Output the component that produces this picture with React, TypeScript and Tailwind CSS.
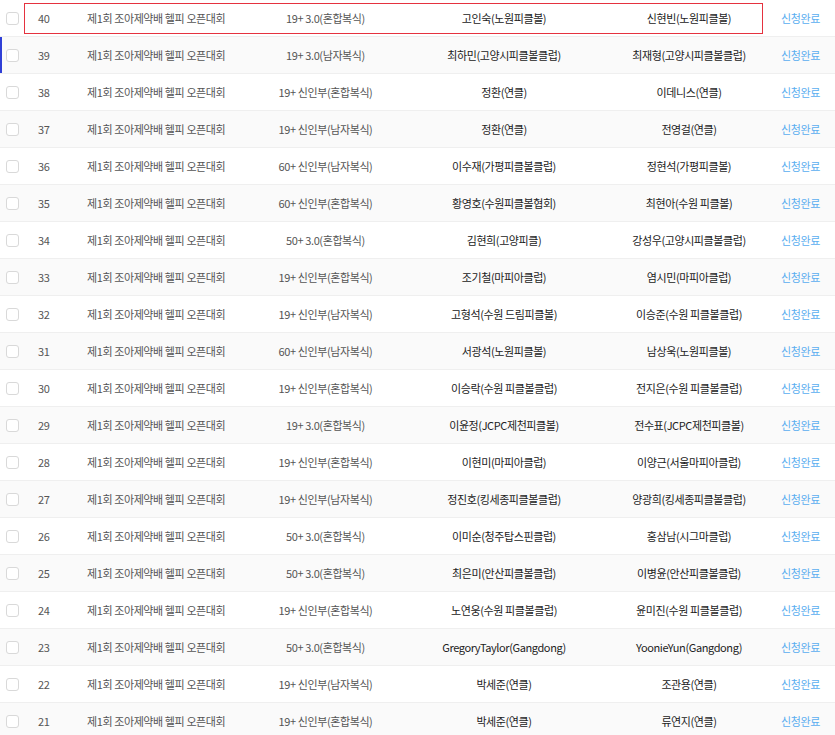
const TITLE = '제1회 조아제약배 헬피 오픈대회';

type Entry = {
  no: number;
  category: string;
  player1: string;
  player2: string;
};

const entries: Entry[] = [
  { no: 40, category: '19+ 3.0(혼합복식)', player1: '고인숙(노원피클볼)', player2: '신현빈(노원피클볼)' },
  { no: 39, category: '19+ 3.0(남자복식)', player1: '최하민(고양시피클볼클럽)', player2: '최재형(고양시피클볼클럽)' },
  { no: 38, category: '19+ 신인부(혼합복식)', player1: '정환(연클)', player2: '이데니스(연클)' },
  { no: 37, category: '19+ 신인부(남자복식)', player1: '정환(연클)', player2: '전영걸(연클)' },
  { no: 36, category: '60+ 신인부(남자복식)', player1: '이수재(가평피클볼클럽)', player2: '정현석(가평피클볼)' },
  { no: 35, category: '60+ 신인부(혼합복식)', player1: '황영호(수원피클볼협회)', player2: '최현아(수원 피클볼)' },
  { no: 34, category: '50+ 3.0(혼합복식)', player1: '김현희(고양피클)', player2: '강성우(고양시피클볼클럽)' },
  { no: 33, category: '19+ 신인부(혼합복식)', player1: '조기철(마피아클럽)', player2: '염시민(마피아클럽)' },
  { no: 32, category: '19+ 신인부(남자복식)', player1: '고형석(수원 드림피클볼)', player2: '이승준(수원 피클볼클럽)' },
  { no: 31, category: '60+ 신인부(남자복식)', player1: '서광석(노원피클볼)', player2: '남상욱(노원피클볼)' },
  { no: 30, category: '19+ 신인부(혼합복식)', player1: '이승락(수원 피클볼클럽)', player2: '전지은(수원 피클볼클럽)' },
  { no: 29, category: '19+ 3.0(혼합복식)', player1: '이윤정(JCPC제천피클볼)', player2: '전수표(JCPC제천피클볼)' },
  { no: 28, category: '19+ 신인부(혼합복식)', player1: '이현미(마피아클럽)', player2: '이양근(서울마피아클럽)' },
  { no: 27, category: '19+ 신인부(남자복식)', player1: '정진호(킹세종피클볼클럽)', player2: '양광희(킹세종피클볼클럽)' },
  { no: 26, category: '50+ 3.0(혼합복식)', player1: '이미순(청주탑스핀클럽)', player2: '홍삼남(시그마클럽)' },
  { no: 25, category: '50+ 3.0(혼합복식)', player1: '최은미(안산피클볼클럽)', player2: '이병윤(안산피클볼클럽)' },
  { no: 24, category: '19+ 신인부(혼합복식)', player1: '노연웅(수원 피클볼클럽)', player2: '윤미진(수원 피클볼클럽)' },
  { no: 23, category: '50+ 3.0(혼합복식)', player1: 'GregoryTaylor(Gangdong)', player2: 'YoonieYun(Gangdong)' },
  { no: 22, category: '19+ 신인부(남자복식)', player1: '박세준(연클)', player2: '조관용(연클)' },
  { no: 21, category: '19+ 신인부(혼합복식)', player1: '박세준(연클)', player2: '류연지(연클)' },
];

function Row({ entry, index }: { entry: Entry; index: number }) {
  const striped = index % 2 === 1;
  const highlighted = index === 0;
  const active = index === 1;

  return (
    <div
      className={`relative flex h-[37px] items-center border-b border-[#efefef] text-[11px] tracking-[-0.4px] ${
        striped ? 'bg-[#fafafa]' : 'bg-white'
      }`}
    >
      {active && <div className="absolute left-0 top-0 h-full w-[2px] bg-[#2f3fd6]" />}
      {highlighted && (
        <div className="pointer-events-none absolute left-[24px] top-[3px] h-[31px] w-[739px] border border-[#e5323f]" />
      )}

      <div className="flex w-[25px] shrink-0 justify-center">
        <span className="h-[13px] w-[13px] rounded-[3px] border border-[#d9d9d9] bg-white" />
      </div>
      <div className="w-[62px] shrink-0 pl-[13px] text-[#555]">{entry.no}</div>
      <div className="w-[176px] shrink-0 text-[#555]">{TITLE}</div>
      <div className="w-[125px] shrink-0 text-center text-[#555]">{entry.category}</div>
      <div className="w-[232px] shrink-0 text-center text-[#222]">{entry.player1}</div>
      <div className="w-[138px] shrink-0 text-center text-[#222]">{entry.player2}</div>
      <div className="w-[77px] shrink-0 pl-[23px] text-[#5aaef0]">신청완료</div>
    </div>
  );
}

export default function App() {
  return (
    <div
      className="w-[835px] overflow-hidden bg-white"
      style={{ fontFamily: '"Noto Sans CJK KR", "Noto Sans", sans-serif' }}
    >
      {entries.map((entry, i) => (
        <Row key={entry.no} entry={entry} index={i} />
      ))}
    </div>
  );
}
